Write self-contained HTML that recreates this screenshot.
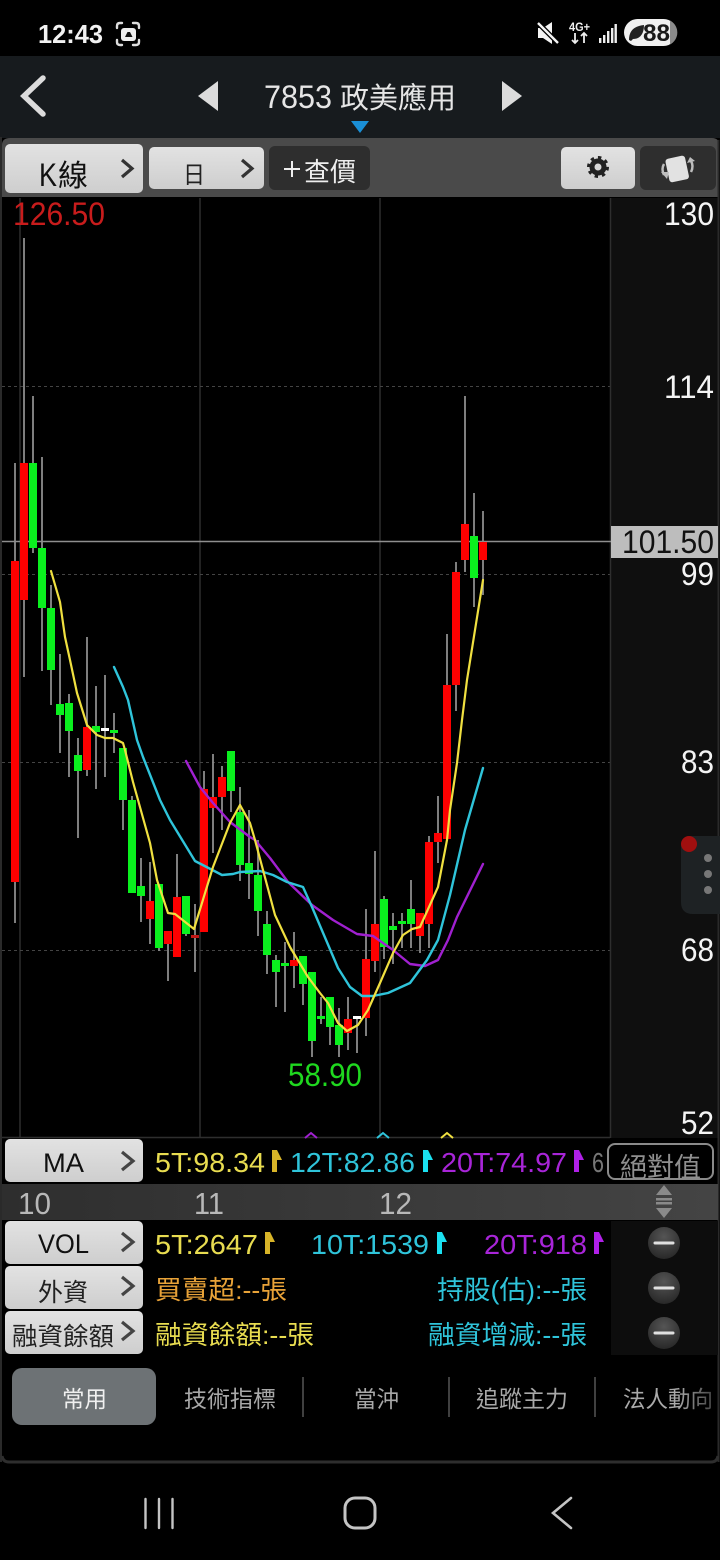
<!DOCTYPE html>
<html lang="zh-Hant">
<head>
<meta charset="utf-8">
<title>7853 政美應用</title>
<style>
html,body{margin:0;padding:0;background:#000;width:720px;height:1560px;overflow:hidden}
svg{display:block}
text{font-family:"Liberation Sans","Noto Sans CJK TC",sans-serif}
</style>
</head>
<body>
<svg xmlns="http://www.w3.org/2000/svg" width="720" height="1560" viewBox="0 0 720 1560">
<defs>
<linearGradient id="btn" x1="0" y1="0" x2="0" y2="1"><stop offset="0" stop-color="#e2e2e2"/><stop offset="1" stop-color="#cecece"/></linearGradient>
<linearGradient id="dbar" x1="0" y1="0" x2="1" y2="0"><stop offset="0" stop-color="#2e2e2e"/><stop offset="1" stop-color="#444"/></linearGradient>
<radialGradient id="minus" cx=".5" cy=".3" r=".8"><stop offset="0" stop-color="#555"/><stop offset="1" stop-color="#222"/></radialGradient>
<linearGradient id="fade" x1="0" y1="0" x2="1" y2="0"><stop offset="0" stop-color="#aaa"/><stop offset=".6" stop-color="#aaa"/><stop offset="1" stop-color="#444"/></linearGradient>
<clipPath id="absclip"><rect x="608" y="1144" width="106" height="36"/></clipPath>
</defs>
<rect width="720" height="1560" fill="#000"/>

<!-- status bar -->
<text x="38" y="43" font-size="26" font-weight="700" fill="#f2f2f2" textLength="65" lengthAdjust="spacingAndGlyphs">12:43</text>
<g fill="none" stroke="#ddd" stroke-width="2.400" stroke-linecap="round">
<path d="M117 28v-2q0-3 3-3h2M133 23h3q3 0 3 3v2M139 40v2q0 3-3 3h-3M122 45h-2q-3 0-3-3v-2"/>
</g>
<rect x="121" y="28" width="15" height="13" rx="3" fill="#eee"/>
<path d="M125 37l2.500-5h2.500l2.500 5z" fill="#111"/>

<path d="M538 28h5l9-6v22l-9-6h-5z" fill="#f4f4f4"/>
<path d="M538 23L558 43" stroke="#000" stroke-width="5"/>
<path d="M538 23L558 43" stroke="#f4f4f4" stroke-width="2.400"/>
<text x="569" y="31" font-size="12" font-weight="700" fill="#eee" textLength="21" lengthAdjust="spacingAndGlyphs">4G+</text>
<path d="M575 33v10M572 40l3 3 3-3M584 43V33M581 36l3-3 3 3" fill="none" stroke="#eee" stroke-width="1.800"/>
<path d="M599 38h2.400v5h-2.400zM603 35h2.400v8h-2.400zM607 31h2.400v12h-2.400zM611 28h2.400v15h-2.400zM614.500 24h2.400v19h-2.400z" fill="#eee"/>
<rect x="624" y="19" width="53" height="27" rx="13.500" fill="#f0f0f0"/>
<path d="M670 20.500v24a13.500 13.500 0 0 0 0-24z" fill="#8a8a8a"/>
<path d="M629 40c0-9 5-14 15-15 0 9-4 14-11 14l-2 2z" fill="#222"/>
<text x="643" y="41" font-size="24" font-weight="700" fill="#1a1a1a" textLength="27" lengthAdjust="spacingAndGlyphs">88</text>

<!-- nav bar -->
<rect x="0" y="56" width="720" height="82" fill="#171b1e"/>
<path d="M43 78L24 96L43 114" fill="none" stroke="#dcdcdc" stroke-width="5.500" stroke-linecap="round"/>
<path d="M218 81v30l-20-15z" fill="#dcdcdc"/>
<path d="M502 81v30l20-15z" fill="#dcdcdc"/>
<text x="264" y="108" font-size="32" fill="#e6e6e6" textLength="68" lengthAdjust="spacingAndGlyphs">7853</text>
<text x="340" y="108" font-size="29" fill="#e6e6e6" textLength="116" lengthAdjust="spacingAndGlyphs">政美應用</text>
<path d="M351 121h18l-9 12z" fill="#1a8fd6"/>

<!-- toolbar -->
<path d="M2 197V145q0-7 8-7h702q7 0 7 7v52z" fill="#4a4a4a"/>
<rect x="5" y="144" width="138" height="49" rx="5" fill="url(#btn)"/>
<rect x="149" y="147" width="115" height="42" rx="5" fill="url(#btn)"/>
<rect x="269" y="146" width="101" height="44" rx="6" fill="#2e2e2e"/>
<rect x="561" y="147" width="74" height="42" rx="5" fill="url(#btn)"/>
<rect x="640" y="146" width="76" height="44" rx="6" fill="#2e2e2e"/>
<text x="39" y="186" font-size="32" fill="#111" textLength="18" lengthAdjust="spacingAndGlyphs">K</text>
<text x="58" y="186" font-size="30" fill="#111" textLength="30" lengthAdjust="spacingAndGlyphs">線</text>
<path d="M122 160l10 8.500-10 8.500" fill="none" stroke="#333" stroke-width="3.200"/>
<text x="183" y="183" font-size="24" fill="#222" textLength="22" lengthAdjust="spacingAndGlyphs">日</text>
<path d="M242 160l10 8.500-10 8.500" fill="none" stroke="#333" stroke-width="3.200"/>
<path d="M284 169h16M292 161v16" stroke="#eee" stroke-width="2"/>
<text x="304" y="181" font-size="26" fill="#eee" textLength="52" lengthAdjust="spacingAndGlyphs">查價</text>
<circle cx="598" cy="167" r="6" fill="none" stroke="#222" stroke-width="5"/>
<circle cx="598" cy="167" r="9.500" fill="none" stroke="#222" stroke-width="3" stroke-dasharray="3.400 4"/>
<g transform="rotate(-12 677 168)"><rect x="667" y="157" width="20" height="24" rx="3" fill="#e2e2e2"/></g>
<path d="M664 175q-3-6 0-11M691 161q3 5 0 11" fill="none" stroke="#bdbdbd" stroke-width="2.500"/>
<path d="M661 172h8l-2 7zM687 163l3-6 5 4z" fill="#bdbdbd"/>

<!-- chart frame -->
<rect x="0" y="198" width="720" height="940" fill="#000"/>
<rect x="611" y="198" width="107" height="940" fill="#0f0f0f"/>
<path d="M1 137V1462M718.500 140V1462" stroke="#2a2a2a" stroke-width="2"/>
<path d="M20 198V1138M200 198V1138M380 198V1138" stroke="#2e2e2e" stroke-width="1.500"/>
<path d="M2 386.500H610M2 574.500H610M2 762.500H610M2 950.500H610" stroke="#444" stroke-width="1" stroke-dasharray="3 3"/>
<path d="M610.500 198V1138" stroke="#2e2e2e" stroke-width="1.500"/>
<path d="M2 1137.500H610" stroke="#2e2e2e" stroke-width="1.500"/>
<path d="M2 541.500H611" stroke="#8e8e8e" stroke-width="1.600"/>

<!-- wicks -->
<path fill="none" stroke="#8c8c8c" stroke-width="1.800" d="M15 463V923M24 238V677M33 396V553M42 457V671M51 585V705M60 654V753M69 694V777M78 738V838M87 637V776M96 686V789M105 675V777M114 713V753M123 748V830M132 796V893M141 858V922M150 862V944M159 884V951M168 931V981M177 854V957M186 896V936M195 904V972M204 771V932M213 754V853M222 766V830M231 751V812M240 787V881M249 810V899M258 840V936M267 911V974M276 955V1007M285 942V1012M294 932V988M303 956V1005M312 972V1057M321 997V1024M330 997V1045M339 1008V1057M348 997V1050M357 1016V1053M366 909V1036M375 851V972M384 896V959M393 913V964M402 913V948M411 880V948M420 913V953M429 836V948M438 796V863M447 634V839M456 562V711M465 396V572M474 493V607M483 511V595"/>
<!-- red bodies -->
<path fill="#fe0000" d="M11 561h8v321h-8zM20 463h8v137h-8zM83 727h8v43h-8zM146 901h8v18h-8zM164 931h8v13h-8zM173 897h8v60h-8zM200 789h8v143h-8zM209 797h8v11h-8zM218 777h8v20h-8zM290 960h8v6h-8zM344 1019h8v14h-8zM362 959h8v59h-8zM371 924h8v37h-8zM416 913h8v23h-8zM425 842h8v82h-8zM434 833h8v9h-8zM443 685h8v154h-8zM452 572h8v113h-8zM461 524h8v36h-8zM479 542h8v18h-8z"/>
<path fill="#c01515" d="M191 935h8v3h-8z"/>
<!-- green bodies -->
<path fill="#0af01e" d="M29 463h8v85h-8zM38 548h8v60h-8zM47 608h8v62h-8zM56 704h8v11h-8zM65 703h8v28h-8zM74 755h8v16h-8zM92 726h8v6h-8zM110 730h8v3h-8zM119 748h8v52h-8zM128 800h8v93h-8zM137 886h8v10h-8zM155 884h8v64h-8zM182 896h8v38h-8zM227 751h8v40h-8zM236 812h8v53h-8zM245 863h8v11h-8zM254 875h8v36h-8zM263 924h8v31h-8zM272 960h8v12h-8zM281 963h8v3h-8zM299 956h8v28h-8zM308 972h8v69h-8zM317 1016h8v3h-8zM326 997h8v30h-8zM335 1025h8v20h-8zM380 899h8v48h-8zM389 926h8v4h-8zM398 921h8v3h-8zM407 909h8v15h-8zM470 536h8v42h-8z"/>
<!-- white doji -->
<path fill="#fff" d="M101 728h8v3h-8zM353 1016h8v3h-8z"/>

<!-- MA lines -->
<g fill="none" stroke-linejoin="round" stroke-linecap="round">
<path stroke="#a020d0" stroke-width="2.400" d="M186 761L200 787L213 803L230 822L250 837L255 840L270 858L288 882L312 905L333 920L357 934L373 936L393 950L410 964L425 966L438 960L448 940L457 917L483 864"/>
<path stroke="#2fc4da" stroke-width="2.400" d="M114 667L123 687L128 700L137 740L143 757L160 800L170 820L195 861L222 875L233 874L240 872L260 871L273 875L287 882L303 887L312 907L338 968L350 987L362 996L373 996L388 993L410 983L427 960L438 940L450 895L465 830L483 768"/>
<path stroke="#f0e040" stroke-width="2.200" d="M51 571L60 602L65 637L70 660L77 693L87 725L97 735L105 738L113 738L123 743L125 750L133 782L150 843L157 880L168 913L175 914L194 929L213 867L230 823L240 805L250 823L255 840L275 915L290 947L308 977L320 993L328 1003L338 1023L347 1031L358 1025L368 1010L380 983L393 953L403 935L412 929L420 927L438 887L447 840L450 810L457 763L462 720L467 680L483 580"/>
</g>

<!-- chart labels -->
<text x="13" y="225" font-size="32" fill="#c81c1c" textLength="92" lengthAdjust="spacingAndGlyphs">126.50</text>
<text x="288" y="1086" font-size="32" fill="#1fd81f" textLength="74" lengthAdjust="spacingAndGlyphs">58.90</text>
<g font-size="32" fill="#f4f4f4">
<text x="664" y="225" textLength="50" lengthAdjust="spacingAndGlyphs">130</text>
<text x="664" y="398" textLength="50" lengthAdjust="spacingAndGlyphs">114</text>
<text x="681" y="585" textLength="33" lengthAdjust="spacingAndGlyphs">99</text>
<text x="681" y="773" textLength="33" lengthAdjust="spacingAndGlyphs">83</text>
<text x="681" y="961" textLength="33" lengthAdjust="spacingAndGlyphs">68</text>
<text x="681" y="1134" textLength="33" lengthAdjust="spacingAndGlyphs">52</text>
</g>
<rect x="611" y="526" width="107" height="32" fill="#bdbdbd"/>
<text x="622" y="553" font-size="32" fill="#111" textLength="92" lengthAdjust="spacingAndGlyphs">101.50</text>

<!-- float widget -->
<path d="M720 836h-28q-11 0-11 11v55q0 12 12 12h27z" fill="#1e2224"/>
<circle cx="689" cy="844" r="8" fill="#a00f0f"/>
<circle cx="708" cy="858" r="4" fill="#777"/><circle cx="708" cy="874" r="4" fill="#777"/><circle cx="708" cy="890" r="4" fill="#777"/>

<!-- peak markers -->
<g fill="none" stroke-width="2">
<path d="M305 1138l6-5 6 5" stroke="#a020d0"/>
<path d="M377 1138l6-5 6 5" stroke="#2fc4da"/>
<path d="M441 1138l6-5 6 5" stroke="#f0e040"/>
</g>

<!-- MA row -->
<rect x="5" y="1139" width="138" height="43" rx="5" fill="url(#btn)"/>
<text x="43" y="1172" font-size="27" fill="#111" textLength="41" lengthAdjust="spacingAndGlyphs">MA</text>
<path d="M122 1152l11 9-11 9" fill="none" stroke="#444" stroke-width="3.200"/>
<g font-size="28">
<text x="155" y="1172" fill="#e8dc50" textLength="110" lengthAdjust="spacingAndGlyphs">5T:98.34</text>
<text x="290" y="1172" fill="#2fc4da" textLength="125" lengthAdjust="spacingAndGlyphs">12T:82.86</text>
<text x="441" y="1172" fill="#a825d8" textLength="126" lengthAdjust="spacingAndGlyphs">20T:74.97</text>
<text x="592" y="1172" fill="#777" textLength="12" lengthAdjust="spacingAndGlyphs">6</text>
</g>
<path d="M272 1150h5l5 10-5 0v12h-5z" fill="#d8b428"/>
<path d="M423 1150h5l5 10-5 0v12h-5z" fill="#1ae0f0"/>
<path d="M574 1150h5l5 10-5 0v12h-5z" fill="#b020e8"/>
<rect x="608" y="1144" width="105" height="35" rx="7" fill="#000" stroke="#8a8a8a" stroke-width="2"/>
<g clip-path="url(#absclip)"><text x="620" y="1177" font-size="27" fill="#8f8f8f" textLength="81" lengthAdjust="spacingAndGlyphs">絕對值</text></g>

<!-- date bar -->
<rect x="2" y="1184" width="716" height="36" fill="url(#dbar)"/>
<g font-size="31" fill="#b8b8b8">
<text x="18" y="1214" textLength="33" lengthAdjust="spacingAndGlyphs">10</text>
<text x="194" y="1214" textLength="30" lengthAdjust="spacingAndGlyphs">11</text>
<text x="379" y="1214" textLength="33" lengthAdjust="spacingAndGlyphs">12</text>
</g>
<path d="M664 1185l8 10h-16zM664 1218l8-10h-16z" fill="#8a8a8a"/>
<path d="M656 1198h16v2.500h-16zM656 1202h16v2.500h-16z" fill="#8a8a8a"/>

<!-- indicator rows -->
<rect x="611" y="1221" width="107" height="134" fill="#0d0d0d"/>
<rect x="5" y="1221" width="138" height="43" rx="5" fill="url(#btn)"/>
<rect x="5" y="1266" width="138" height="43" rx="5" fill="url(#btn)"/>
<rect x="5" y="1311" width="138" height="43" rx="5" fill="url(#btn)"/>
<text x="38" y="1253" font-size="27" fill="#111" textLength="51" lengthAdjust="spacingAndGlyphs">VOL</text>
<text x="38" y="1301" font-size="25" fill="#222" textLength="50" lengthAdjust="spacingAndGlyphs">外資</text>
<text x="12" y="1345" font-size="25" fill="#222" textLength="102" lengthAdjust="spacingAndGlyphs">融資餘額</text>
<path d="M122 1233l11 9-11 9M122 1277l11 9-11 9M122 1322l11 9-11 9" fill="none" stroke="#444" stroke-width="3.200"/>
<g font-size="28">
<text x="155" y="1254" fill="#e8dc50" textLength="103" lengthAdjust="spacingAndGlyphs">5T:2647</text>
<text x="311" y="1254" fill="#2fc4da" textLength="118" lengthAdjust="spacingAndGlyphs">10T:1539</text>
<text x="484" y="1254" fill="#a825d8" textLength="103" lengthAdjust="spacingAndGlyphs">20T:918</text>
</g>
<path d="M265 1232h5l5 10-5 0v12h-5z" fill="#d8b428"/>
<path d="M437 1232h5l5 10-5 0v12h-5z" fill="#1ae0f0"/>
<path d="M594 1232h5l5 10-5 0v12h-5z" fill="#b020e8"/>
<g font-size="26">
<text x="155" y="1299" fill="#e8a238" textLength="132" lengthAdjust="spacingAndGlyphs">買賣超:--張</text>
<text x="437" y="1299" fill="#2fc4da" textLength="150" lengthAdjust="spacingAndGlyphs">持股(估):--張</text>
<text x="155" y="1344" fill="#e8dc50" textLength="159" lengthAdjust="spacingAndGlyphs">融資餘額:--張</text>
<text x="428" y="1344" fill="#2fc4da" textLength="159" lengthAdjust="spacingAndGlyphs">融資增減:--張</text>
</g>
<g>
<circle cx="664" cy="1243" r="16" fill="url(#minus)"/><circle cx="664" cy="1288" r="16" fill="url(#minus)"/><circle cx="664" cy="1333" r="16" fill="url(#minus)"/>
<path d="M655 1243h18M655 1288h18M655 1333h18" stroke="#e0e0e0" stroke-width="3" stroke-linecap="round"/>
</g>

<!-- tabs -->
<rect x="12" y="1368" width="144" height="57" rx="10" fill="#6d7275"/>
<text x="62" y="1407" font-size="23" fill="#f0f0f0" textLength="45" lengthAdjust="spacingAndGlyphs">常用</text>
<g font-size="23" fill="#a8a8a8">
<text x="184" y="1407" textLength="92" lengthAdjust="spacingAndGlyphs">技術指標</text>
<text x="354" y="1407" textLength="45" lengthAdjust="spacingAndGlyphs">當沖</text>
<text x="476" y="1407" textLength="92" lengthAdjust="spacingAndGlyphs">追蹤主力</text>
<text x="623" y="1407" textLength="90" lengthAdjust="spacingAndGlyphs" fill="url(#fade)">法人動向</text>
</g>
<path d="M303 1377v40M449 1377v40M595 1377v40" stroke="#555" stroke-width="1.500"/>

<!-- panel bottom -->
<path d="M2 1456q1 6 7 6H711q6 0 7-6" fill="none" stroke="#2e2e2e" stroke-width="3"/>

<!-- system nav -->
<path d="M145.500 1499v29M159 1499v29M172.500 1499v29" stroke="#c4c4c4" stroke-width="2.400" stroke-linecap="round"/>
<rect x="345" y="1498" width="30" height="30" rx="10" fill="none" stroke="#c4c4c4" stroke-width="3"/>
<path d="M571 1498L553 1513L571 1528" fill="none" stroke="#c4c4c4" stroke-width="2.600" stroke-linecap="round"/>
</svg>
</body>
</html>
